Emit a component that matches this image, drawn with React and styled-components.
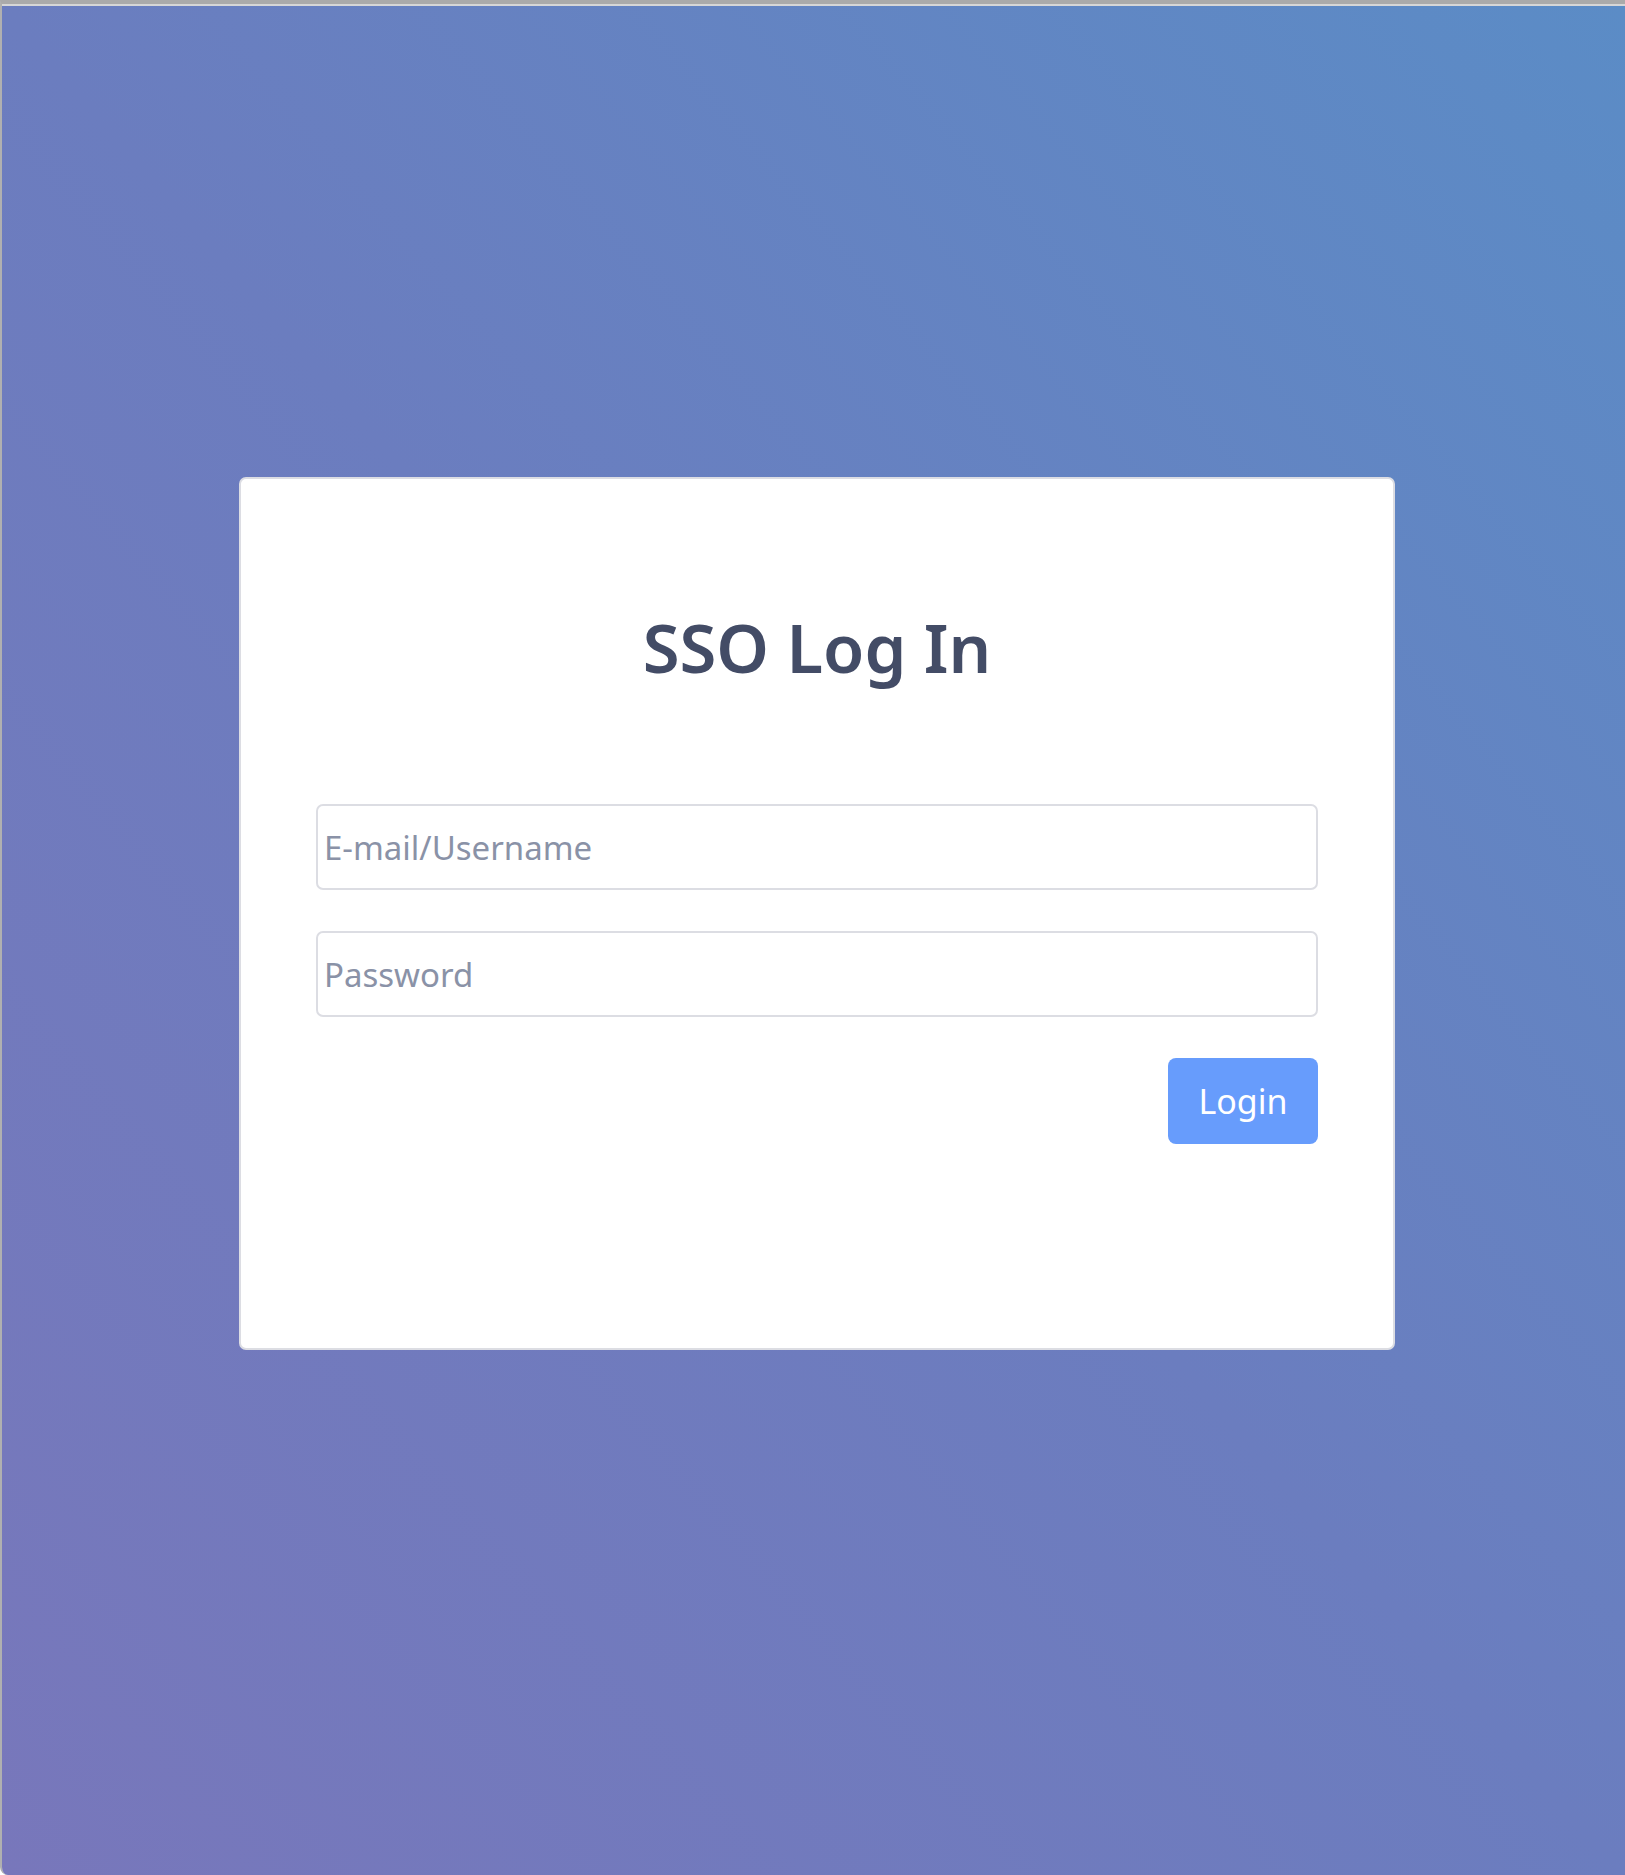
import styled, { createGlobalStyle } from 'styled-components'

const GlobalStyle = createGlobalStyle`
    html, body {
        margin: 0;
        padding: 0;
        background: #ffffff;
    }
    * {
        box-sizing: border-box;
    }
`

const Janela = styled.div`
    width: 1625px;
    height: 1875px;
    border-top: 4px solid #aaaaaa;
    border-left: 2px solid #b0b0b0;
    border-bottom-left-radius: 8px;
    overflow: hidden;
    padding-top: 2px;
    background: #d6d6d6;
`

const Fundo = styled.main`
    height: 100%;
    background-image: linear-gradient(to top right, #7877bb 0%, #6b7dbf 50%, #5b8cc6 100%);
    padding: 471px 0 0 237px;
`

const Cartao = styled.section`
    width: 1156px;
    height: 873px;
    background: #ffffff;
    border: 2px solid #dcdde3;
    border-radius: 7px;
    padding: 120px 75px 0;
    display: flex;
    flex-direction: column;
    font-family: "Noto Sans", "Open Sans", sans-serif;
`

const Titulo = styled.h1`
    margin: 0 0 109px;
    text-align: center;
    font-size: 67px;
    font-weight: 600;
    line-height: 96px;
    color: #434c66;
`

const Campo = styled.input`
    width: 100%;
    height: 86px;
    margin-bottom: ${props => props.espaco}px;
    border: 2px solid #dcdde3;
    border-radius: 7px;
    padding: 0 6px;
    font-family: "Noto Sans", "Open Sans", sans-serif;
    font-size: 33px;
    color: #434c66;
    background: #ffffff;
    outline: none;
    &::placeholder {
        color: #8a92a7;
    }
`

const Acoes = styled.div`
    display: flex;
    justify-content: flex-end;
`

const Botao = styled.button`
    width: 150px;
    height: 86px;
    border: none;
    border-radius: 8px;
    background: #679cfc;
    color: #ffffff;
    font-family: "Noto Sans", "Open Sans", sans-serif;
    font-size: 34px;
    cursor: pointer;
`

function App() {
    return (
        <>
            <GlobalStyle />
            <Janela>
                <Fundo>
                    <Cartao>
                        <Titulo>SSO Log In</Titulo>
                        <Campo type="text" placeholder="E-mail/Username" espaco={41} />
                        <Campo type="password" placeholder="Password" espaco={41} />
                        <Acoes>
                            <Botao>Login</Botao>
                        </Acoes>
                    </Cartao>
                </Fundo>
            </Janela>
        </>
    )
}

export default App
